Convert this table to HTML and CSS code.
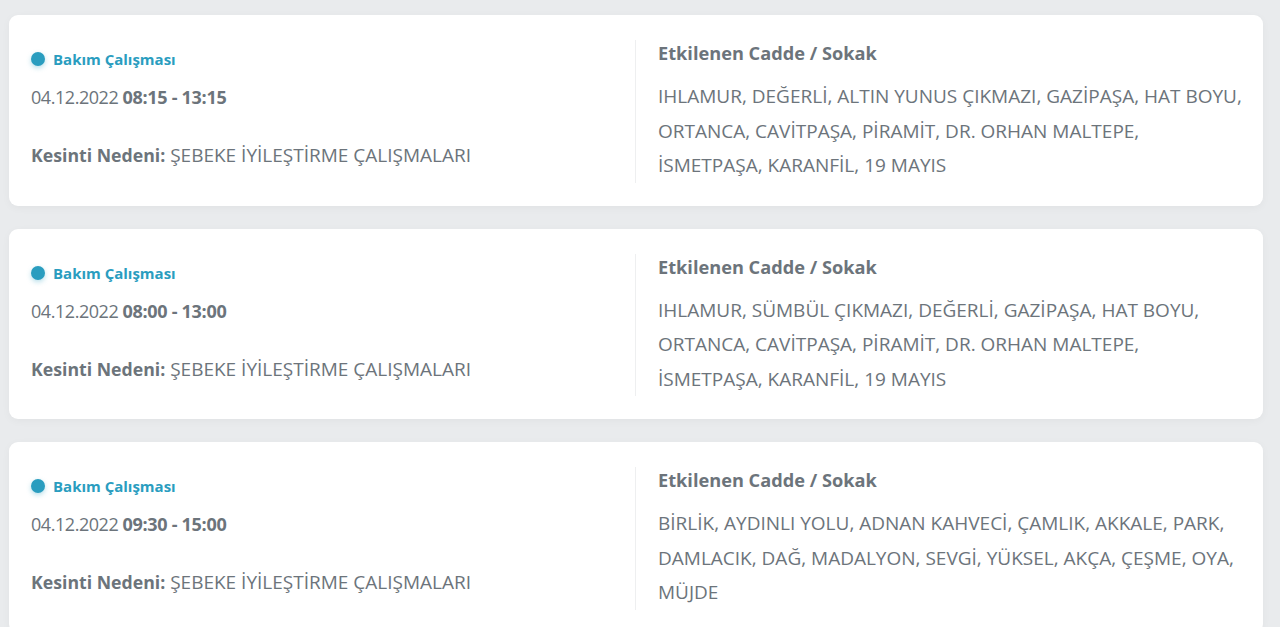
FILE: index.html
```html
<!DOCTYPE html>
<html lang="tr">
<head>
<meta charset="utf-8">
<link rel="stylesheet" href="styles.css">
</head>
<body>
<div class="list">
  <div class="card">
    <div class="left">
      <div class="tag"><span class="dot"></span>Bakım Çalışması</div>
      <div class="date">04.12.2022 <b>08:15 - 13:15</b></div>
      <div class="reason"><b>Kesinti Nedeni:</b> ŞEBEKE İYİLEŞTİRME ÇALIŞMALARI</div>
    </div>
    <div class="right">
      <div class="head">Etkilenen Cadde / Sokak</div>
      <div class="streets">IHLAMUR, DEĞERLİ, ALTIN YUNUS ÇIKMAZI, GAZİPAŞA, HAT BOYU, ORTANCA, CAVİTPAŞA, PİRAMİT, DR. ORHAN MALTEPE, İSMETPAŞA, KARANFİL, 19 MAYIS</div>
    </div>
  </div>
  <div class="card">
    <div class="left">
      <div class="tag"><span class="dot"></span>Bakım Çalışması</div>
      <div class="date">04.12.2022 <b>08:00 - 13:00</b></div>
      <div class="reason"><b>Kesinti Nedeni:</b> ŞEBEKE İYİLEŞTİRME ÇALIŞMALARI</div>
    </div>
    <div class="right">
      <div class="head">Etkilenen Cadde / Sokak</div>
      <div class="streets">IHLAMUR, SÜMBÜL ÇIKMAZI, DEĞERLİ, GAZİPAŞA, HAT BOYU, ORTANCA, CAVİTPAŞA, PİRAMİT, DR. ORHAN MALTEPE, İSMETPAŞA, KARANFİL, 19 MAYIS</div>
    </div>
  </div>
  <div class="card">
    <div class="left">
      <div class="tag"><span class="dot"></span>Bakım Çalışması</div>
      <div class="date">04.12.2022 <b>09:30 - 15:00</b></div>
      <div class="reason"><b>Kesinti Nedeni:</b> ŞEBEKE İYİLEŞTİRME ÇALIŞMALARI</div>
    </div>
    <div class="right">
      <div class="head">Etkilenen Cadde / Sokak</div>
      <div class="streets">BİRLİK, AYDINLI YOLU, ADNAN KAHVECİ, ÇAMLIK, AKKALE, PARK, DAMLACIK, DAĞ, MADALYON, SEVGİ, YÜKSEL, AKÇA, ÇEŞME, OYA, MÜJDE</div>
    </div>
  </div>
</div>
</body>
</html>
```

FILE: styles.css
```css
* { box-sizing: border-box; }
html, body { margin: 0; padding: 0; }
body {
  background: #e9ebed;
  font-family: "Open Sans", "Noto Sans", sans-serif;
  color: #6c747b;
  overflow: hidden;
}
.list {
  display: flex;
  flex-direction: column;
  gap: 23px;
  padding: 15px 17px 0 9px;
}
.card {
  background: #fff;
  border-radius: 9px;
  box-shadow: 0 2px 8px rgba(0,0,0,0.04);
  display: flex;
  padding: 25px 0 23px 0;
}
.left {
  width: 627px;
  padding: 9px 22px 0 22px;
  border-right: 1px solid #eeeff0;
}
.right {
  flex: 1;
  padding: 0 20px 0 22px;
}
.tag {
  display: flex;
  align-items: center;
  font-size: 15px;
  font-weight: 700;
  color: #2a9dbf;
  height: 20px;
}
.dot {
  width: 14px;
  height: 14px;
  border-radius: 50%;
  background: #2a9dbf;
  margin-right: 8px;
  box-shadow: 0 2px 5px rgba(42,157,191,0.35);
}
.date {
  font-size: 18px;
  letter-spacing: -0.45px;
  margin-top: 16px;
  line-height: 24px;
}
.date b { font-weight: 700; letter-spacing: -0.3px; }
.reason {
  font-size: 19px;
  margin-top: 34px;
  line-height: 24px;
}
.reason b { font-weight: 700; font-size: 17.7px; }
.head {
  font-size: 18.2px;
  font-weight: 700;
  line-height: 26px;
}
.streets {
  font-size: 19px;
  line-height: 34.5px;
  margin-top: 13px;
}
```
